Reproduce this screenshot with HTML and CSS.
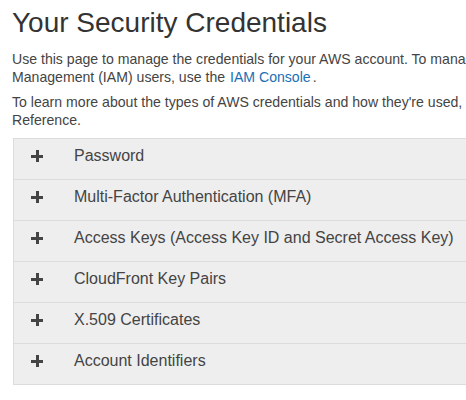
FILE: index.html
```html
<!DOCTYPE html>
<html>
<head>
<meta charset="utf-8">
<link rel="stylesheet" href="styles.css">
</head>
<body>
<div class="page">
  <h1 class="title">Your Security Credentials</h1>
  <p class="intro">Use this page to manage the credentials for your AWS account. To manage credentials for AWS Identity and Access<br>Management (IAM) users, use the <a class="link" href="#">IAM Console</a>.</p>
  <p class="intro">To learn more about the types of AWS credentials and how they're used, see <a class="link" href="#">AWS Security Credentials</a> in AWS General<br>Reference.</p>
  <div class="panel">
    <div class="row"><span class="plus"></span><span class="label">Password</span></div>
    <div class="row"><span class="plus"></span><span class="label">Multi-Factor Authentication (MFA)</span></div>
    <div class="row"><span class="plus"></span><span class="label">Access Keys (Access Key ID and Secret Access Key)</span></div>
    <div class="row"><span class="plus"></span><span class="label">CloudFront Key Pairs</span></div>
    <div class="row"><span class="plus"></span><span class="label">X.509 Certificates</span></div>
    <div class="row"><span class="plus"></span><span class="label">Account Identifiers</span></div>
  </div>
</div>
</body>
</html>
```
FILE: styles.css
```css
html, body {
  margin: 0;
  padding: 0;
  overflow: hidden;
  background: #fff;
}
body {
  font-family: "Liberation Sans", Arial, sans-serif;
  color: #444;
}
.page {
  width: 900px;
  padding-left: 12px;
}
.title {
  margin: 5px 0 0;
  font-size: 28px;
  line-height: 36px;
  font-weight: normal;
  color: #333;
}
.intro {
  margin: 9px 0 0;
  font-size: 14.1px;
  line-height: 18px;
  white-space: nowrap;
}
.intro + .intro {
  margin-top: 7px;
}
.link {
  color: #1a6fb5;
  text-decoration: none;
  padding: 0 2px 0 1px;
}
.panel {
  margin: 9px 0 0 1px;
  width: 600px;
  background: #eee;
  border: 1px solid #dcdcdc;
  border-top: none;
}
.row {
  display: flex;
  align-items: center;
  border-top: 1px solid #dcdcdc;
  padding: 8px 0 14px;
  height: 18px;
}
.plus {
  position: relative;
  width: 12px;
  height: 12px;
  margin-left: 17px;
  margin-right: 31px;
  flex: none;
}
.plus::before, .plus::after {
  content: "";
  position: absolute;
  background: #444;
}
.plus::before {
  left: 0;
  right: 0;
  top: 4.5px;
  height: 3px;
}
.plus::after {
  top: 0;
  bottom: 0;
  left: 4.5px;
  width: 3px;
}
.label {
  font-size: 16px;
  line-height: 18px;
  color: #444;
}
```
